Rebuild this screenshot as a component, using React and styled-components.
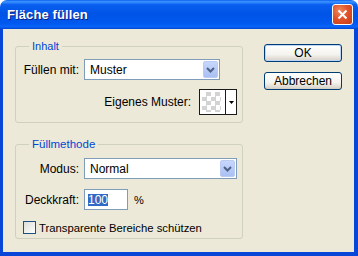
import React from "react";
import styled, { createGlobalStyle } from "styled-components";

const GlobalStyle = createGlobalStyle`
  html, body {
    margin: 0;
    padding: 0;
    background: #ffffff;
  }
  body {
    font-family: "Liberation Sans", Arial, sans-serif;
    font-size: 11px;
    color: #000000;
  }
`;

const Window = styled.div`
  width: 358px;
  height: 256px;
  display: flex;
  flex-direction: column;
  box-sizing: border-box;
`;

const TitleBar = styled.div`
  height: 29px;
  flex: none;
  display: flex;
  align-items: center;
  justify-content: space-between;
  padding: 0 5px 0 7px;
  border-radius: 7px 7px 0 0;
  background: linear-gradient(
    to bottom,
    #0a5ff2 0%,
    #3d95ff 6%,
    #0a5ff0 16%,
    #0054e6 45%,
    #0058ee 80%,
    #0a64f8 92%,
    #0045d4 100%
  );
`;

const Title = styled.span`
  font-weight: bold;
  font-size: 13px;
  color: #ffffff;
  text-shadow: 1px 1px 0 #0a1e80;
  letter-spacing: 0.1px;
`;

const CloseButton = styled.div`
  width: 21px;
  height: 21px;
  box-sizing: border-box;
  border: 1px solid #ffffff;
  border-radius: 3px;
  background: radial-gradient(circle at 35% 30%, #f08a5e 0%, #e2532a 45%, #c43c14 100%);
  display: flex;
  align-items: center;
  justify-content: center;
`;

const Body = styled.div`
  flex: 1;
  display: flex;
  gap: 21px;
  background: #ece9d8;
  border-style: solid;
  border-color: #0846d8;
  border-width: 0 4px 4px 3px;
  padding: 11px 0 0 12px;
  box-sizing: border-box;
`;

const LeftColumn = styled.div`
  width: 228px;
  display: flex;
  flex-direction: column;
  gap: 15px;
`;

const Group = styled.fieldset`
  margin: 0;
  padding: 0;
  border: 1px solid #d0d0bf;
  border-radius: 3px;
  min-width: 0;
`;

const Legend = styled.legend`
  margin-left: 13px;
  padding: 0 3px;
  line-height: 13px;
  font-size: ${(p) => p.$size || 11}px;
  color: #0046d5;
`;

const GroupContent = styled.div`
  display: flex;
  flex-direction: column;
  padding: ${(p) => p.$pad};
`;

const Row = styled.div`
  display: flex;
  align-items: center;
  justify-content: ${(p) => (p.$end ? "flex-end" : "flex-start")};
  margin-top: ${(p) => p.$top || 0}px;
  padding-right: ${(p) => (p.$end ? 5 : 0)}px;
  font-size: 12px;
`;

const Label = styled.span`
  width: 63px;
  text-align: right;
  margin-right: 5px;
  white-space: nowrap;
`;

const InlineLabel = styled.span`
  margin-right: 8px;
  white-space: nowrap;
`;

const Select = styled.div`
  width: ${(p) => p.$w}px;
  height: 21px;
  box-sizing: border-box;
  border: 1px solid #7f9db9;
  background: #ffffff;
  display: flex;
  align-items: center;
  justify-content: space-between;
  padding: 1px 1px 1px 5px;
`;

const SelectText = styled.span`
  font-size: 12px;
`;

const DropButton = styled.div`
  width: 15px;
  height: 17px;
  box-sizing: border-box;
  border: 1px solid #bccbf3;
  border-radius: 2px;
  background: linear-gradient(to bottom, #c7d7fc 0%, #b5c9f7 60%, #aac0f3 100%);
  display: flex;
  align-items: center;
  justify-content: center;
`;

const Swatch = styled.div`
  display: flex;
  height: 26px;
  box-sizing: border-box;
  border: 1px solid #1a1a1a;
  background: #ffffff;
`;

const SwatchCell = styled.div`
  width: 26px;
  box-sizing: border-box;
  padding: 2px 4px 2px 2px;
  border-right: 1px solid #1a1a1a;
`;

const Checker = styled.div`
  width: 100%;
  height: 100%;
  background-color: #ffffff;
  background-image: conic-gradient(#d3d3d3 25%, #ffffff 0 50%, #d3d3d3 0 75%, #ffffff 0);
  background-size: 9px 9px;
`;

const SwatchArrow = styled.div`
  width: 10px;
  display: flex;
  align-items: center;
  justify-content: center;
`;

const TextBox = styled.div`
  width: 44px;
  height: 21px;
  box-sizing: border-box;
  border: 1px solid #7f9db9;
  background: #ffffff;
  display: flex;
  align-items: center;
  padding-left: 3px;
`;

const Selected = styled.span`
  background: #316ac5;
  color: #ffffff;
  font-size: 12px;
  line-height: 12px;
`;

const Unit = styled.span`
  margin-left: 6px;
  font-size: 11px;
`;

const CheckRow = styled.label`
  display: flex;
  align-items: center;
  margin-top: 11px;
  padding-left: 7px;
  font-size: 11.3px;
`;

const CheckBox = styled.span`
  width: 13px;
  height: 13px;
  box-sizing: border-box;
  border: 1px solid #1c5180;
  background: linear-gradient(135deg, #dcdcd7 0%, #ffffff 100%);
  margin-right: 3px;
`;

const RightColumn = styled.div`
  display: flex;
  flex-direction: column;
  gap: 10px;
  margin-top: 4px;
`;

const Button = styled.div`
  width: 78px;
  height: 18px;
  box-sizing: border-box;
  border: 1px solid #003c74;
  border-radius: 3px;
  background: linear-gradient(to bottom, #ffffff 0%, #f4f3ee 60%, #d6d0c5 100%);
  box-shadow: ${(p) => (p.$default ? "inset 0 0 0 1px #bcd4f6" : "inset 0 -1px 0 #d6d0c5")};
  display: flex;
  align-items: center;
  justify-content: center;
  font-size: 12px;
`;

const Chevron = () => (
  <svg width="9" height="6" viewBox="0 0 9 6">
    <path d="M1 1 L4.5 4.5 L8 1" fill="none" stroke="#4d6185" strokeWidth="2" />
  </svg>
);

export default function App() {
  return (
    <Window>
      <GlobalStyle />
      <TitleBar>
        <Title>Fläche füllen</Title>
        <CloseButton>
          <svg width="11" height="11" viewBox="0 0 11 11">
            <path d="M1.5 1.5 L9.5 9.5 M9.5 1.5 L1.5 9.5" stroke="#ffffff" strokeWidth="2" />
          </svg>
        </CloseButton>
      </TitleBar>
      <Body>
        <LeftColumn>
          <Group>
            <Legend>Inhalt</Legend>
            <GroupContent $pad="6px 0 7px 0">
              <Row>
                <Label>Füllen mit:</Label>
                <Select $w={136}>
                  <SelectText>Muster</SelectText>
                  <DropButton>
                    <Chevron />
                  </DropButton>
                </Select>
              </Row>
              <Row $end $top={9}>
                <InlineLabel>Eigenes Muster:</InlineLabel>
                <Swatch>
                  <SwatchCell>
                    <Checker />
                  </SwatchCell>
                  <SwatchArrow>
                    <svg width="5" height="3" viewBox="0 0 5 3">
                      <path d="M0 0 L5 0 L2.5 3 Z" fill="#000000" />
                    </svg>
                  </SwatchArrow>
                </Swatch>
              </Row>
            </GroupContent>
          </Group>
          <Group>
            <Legend $size={11.5}>Füllmethode</Legend>
            <GroupContent $pad="7px 0 4px 0">
              <Row>
                <Label>Modus:</Label>
                <Select $w={153}>
                  <SelectText>Normal</SelectText>
                  <DropButton>
                    <Chevron />
                  </DropButton>
                </Select>
              </Row>
              <Row $top={10}>
                <Label>Deckkraft:</Label>
                <TextBox>
                  <Selected>100</Selected>
                </TextBox>
                <Unit>%</Unit>
              </Row>
              <CheckRow>
                <CheckBox />
                Transparente Bereiche schützen
              </CheckRow>
            </GroupContent>
          </Group>
        </LeftColumn>
        <RightColumn>
          <Button $default>OK</Button>
          <Button>Abbrechen</Button>
        </RightColumn>
      </Body>
    </Window>
  );
}
